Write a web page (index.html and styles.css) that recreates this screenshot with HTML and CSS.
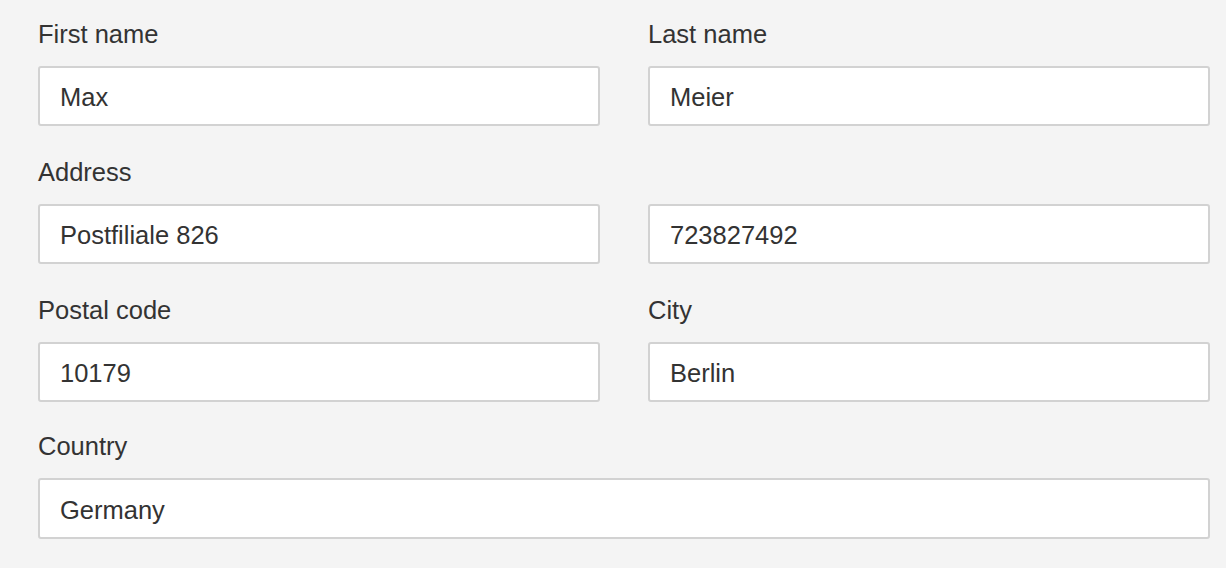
FILE: index.html
```html
<!DOCTYPE html>
<html lang="en">
<head>
<meta charset="utf-8">
<title>Address form</title>
<link rel="stylesheet" href="styles.css">
</head>
<body>
<form class="form">
  <div class="field">
    <label class="label" for="fn">First name</label>
    <input class="input" id="fn" type="text" value="Max">
  </div>
  <div class="field">
    <label class="label" for="ln">Last name</label>
    <input class="input" id="ln" type="text" value="Meier">
  </div>
  <div class="field">
    <label class="label" for="ad">Address</label>
    <input class="input" id="ad" type="text" value="Postfiliale 826">
  </div>
  <div class="field">
    <label class="label" for="ad2">&nbsp;</label>
    <input class="input" id="ad2" type="text" value="723827492">
  </div>
  <div class="field">
    <label class="label" for="pc">Postal code</label>
    <input class="input" id="pc" type="text" value="10179">
  </div>
  <div class="field">
    <label class="label" for="ci">City</label>
    <input class="input" id="ci" type="text" value="Berlin">
  </div>
  <div class="field field-wide">
    <label class="label" for="co">Country</label>
    <input class="input input-wide" id="co" type="text" value="Germany">
  </div>
</form>
</body>
</html>
```
FILE: styles.css
```css
* { box-sizing: border-box; }
html, body {
  margin: 0;
  padding: 0;
  background: #f4f4f4;
}
body {
  font-family: "Liberation Sans", Arial, Helvetica, sans-serif;
  color: #333333;
}
.form {
  display: grid;
  grid-template-columns: 562px 562px;
  column-gap: 48px;
  row-gap: 28px;
  padding: 15.5px 16px 0 38px;
}
.field {
  display: flex;
  flex-direction: column;
}
.field-wide {
  grid-column: 1 / 3;
  margin-top: -2px;
}
.label {
  display: block;
  font-size: 25.5px;
  line-height: 36px;
  height: 36px;
  margin-bottom: 14.5px;
  color: #333333;
}
.input {
  display: block;
  width: 100%;
  height: 59.5px;
  margin: 0;
  padding: 3px 20px 0 20px;
  border: 2px solid #d2d2d2;
  border-radius: 3px;
  background: #ffffff;
  font-family: "Liberation Sans", Arial, Helvetica, sans-serif;
  font-size: 25.5px;
  color: #333333;
  outline: none;
}
.input-wide {
  height: 61px;
}
```
